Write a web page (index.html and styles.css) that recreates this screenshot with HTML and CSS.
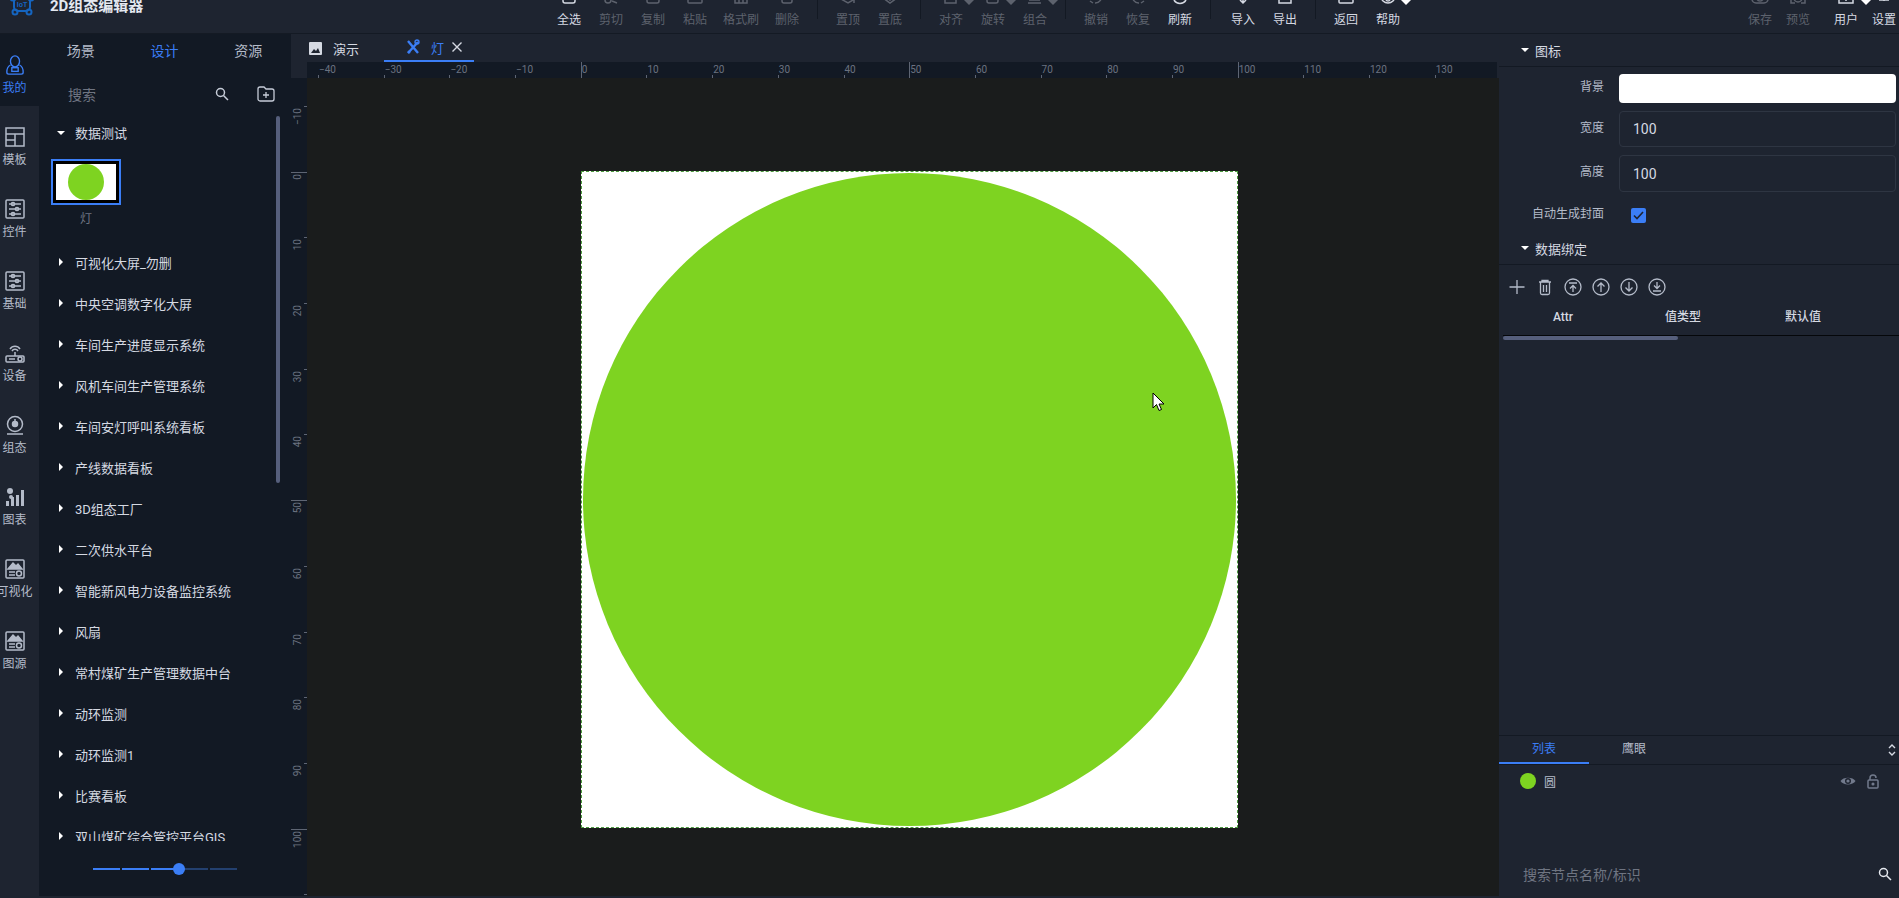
FILE: index.html
```html
<!DOCTYPE html>
<html lang="zh-CN">
<head>
    <meta charset="UTF-8">
    <title>2D组态编辑器</title>
    <link rel="stylesheet" href="styles.css">
</head>
<body>
<div class="app">
    <!-- top toolbar, its icons are cut by the top of the window -->
    <div class="topbar">
        <div class="brand">
            <svg class="logo" width="26" height="24" viewBox="0 0 26 24" fill="none" stroke="#1565c0" stroke-width="2">
                <rect x="5" y="4" width="16" height="15" rx="4"/>
                <circle cx="4" cy="6" r="2.5"/><circle cx="22" cy="6" r="2.5"/>
                <circle cx="6" cy="20" r="2.5"/><circle cx="20" cy="20" r="2.5"/>
                <text x="13" y="15" text-anchor="middle" font-size="7" font-weight="700" fill="#1565c0" stroke="none" font-family="Liberation Sans">IoT</text>
            </svg>
            <span class="brand-title">2D组态编辑器</span>
        </div>
        <div class="tool on"><svg class="ticon" viewBox="0 0 18 18"><rect x="3" y="6" width="12" height="10" rx="2"/></svg><span>全选</span></div>
        <div class="tool"><svg class="ticon" viewBox="0 0 18 18"><circle cx="6" cy="13" r="3"/><path d="M9 13l7-6M10 14l5 2"/></svg><span>剪切</span></div>
        <div class="tool"><svg class="ticon" viewBox="0 0 18 18"><rect x="3" y="6" width="12" height="10" rx="2"/></svg><span>复制</span></div>
        <div class="tool"><svg class="ticon" viewBox="0 0 18 18"><rect x="2" y="6" width="14" height="10" rx="1"/><path d="M2 12h14"/></svg><span>粘贴</span></div>
        <div class="tool wide"><svg class="ticon" viewBox="0 0 18 18"><path d="M3 10v6h12v-6M7 12v4M11 12v4"/></svg><span>格式刷</span></div>
        <div class="tool"><svg class="ticon" viewBox="0 0 18 18"><path d="M4 8v6a2 2 0 0 0 2 2h6a2 2 0 0 0 2-2V8"/></svg><span>删除</span></div>
        <i class="sep"></i>
        <div class="tool"><svg class="ticon" viewBox="0 0 18 18"><path d="M2 12l7 4 5-3M15 8v8"/></svg><span>置顶</span></div>
        <div class="tool"><svg class="ticon" viewBox="0 0 18 18"><path d="M2 11l7 5 7-5M6 11l3 2 3-2"/></svg><span>置底</span></div>
        <i class="sep"></i>
        <div class="tool"><svg class="ticon" viewBox="0 0 18 18"><rect x="3" y="6" width="11" height="10"/></svg><i class="caret"></i><span>对齐</span></div>
        <div class="tool"><svg class="ticon" viewBox="0 0 18 18"><rect x="3" y="6" width="11" height="10" rx="2"/></svg><i class="caret"></i><span>旋转</span></div>
        <div class="tool"><svg class="ticon" viewBox="0 0 18 18"><path d="M2 16h13M3 13h11"/></svg><i class="caret"></i><span>组合</span></div>
        <i class="sep"></i>
        <div class="tool"><svg class="ticon" viewBox="0 0 18 18"><path d="M3 14l3 2M14 8a6 6 0 0 1-6 8"/></svg><span>撤销</span></div>
        <div class="tool"><svg class="ticon" viewBox="0 0 18 18"><path d="M15 14l-3 2M4 8a6 6 0 0 0 6 8"/></svg><span>恢复</span></div>
        <div class="tool on"><svg class="ticon" viewBox="0 0 18 18"><path d="M3 13a7 7 0 0 0 12 0"/></svg><span>刷新</span></div>
        <i class="sep"></i>
        <div class="tool on gap"><svg class="ticon" viewBox="0 0 18 18"><path d="M9 10v5M6 13l3 3 3-3" /></svg><span>导入</span></div>
        <div class="tool on"><svg class="ticon" viewBox="0 0 18 18"><path d="M3 10v6h12v-6"/></svg><span>导出</span></div>
        <i class="sep"></i>
        <div class="tool on"><svg class="ticon" viewBox="0 0 18 18"><rect x="2" y="4" width="14" height="12" rx="1"/></svg><span>返回</span></div>
        <div class="tool on"><svg class="ticon" viewBox="0 0 18 18"><circle cx="9" cy="9" r="7"/><circle cx="9" cy="12" r="2"/></svg><i class="caret"></i><span>帮助</span></div>
        <div class="tool-right">
            <div class="tool slim"><svg class="ticon" viewBox="0 0 18 18"><rect x="1" y="6" width="16" height="10" rx="4"/><circle cx="9" cy="11" r="3"/></svg><span>保存</span></div>
            <div class="tool slim"><svg class="ticon" viewBox="0 0 18 18"><path d="M2 12v4h4M16 12v4h-4"/><circle cx="9" cy="11" r="4"/></svg><span>预览</span></div>
            <div class="tool slim on push"><svg class="ticon" viewBox="0 0 18 18"><rect x="2" y="4" width="14" height="12"/><path d="M9 8v6"/></svg><i class="caret"></i><span>用户</span></div>
            <div class="tool slim on"><svg class="ticon" viewBox="0 0 18 18"><path d="M4 13h10M9 8v6"/></svg><span>设置</span></div>
        </div>
    </div>

    <div class="main">
        <div class="rail">
            <div class="rail-item active">
                <svg class="rail-icon" viewBox="0 0 22 22" fill="none" stroke="#3b7ef6" stroke-width="1.8">
                    <ellipse cx="11" cy="7" rx="5" ry="6"/>
                    <path d="M6 11c-3 1.500-4 5-4 8 0 1 1 2 2 2h14c1 0 2-1 2-2 0-3-1-6.500-4-8"/>
                    <rect x="7.500" y="14" width="7" height="4"/>
                </svg>
                <span>我的</span>
            </div>
            <div class="rail-item">
                <svg class="rail-icon" viewBox="0 0 20 20"><rect x="1" y="1" width="18" height="18"/><path d="M1 7h18M10 7v12M1 13h9"/></svg>
                <span>模板</span>
            </div>
            <div class="rail-item">
                <svg class="rail-icon" viewBox="0 0 20 20"><rect x="1" y="1" width="18" height="18" rx="1"/><path d="M4 5h12M4 10h12M4 15h12"/><circle cx="8" cy="5" r="1.600"/><circle cx="12" cy="10" r="1.600"/><circle cx="8" cy="15" r="1.600"/></svg>
                <span>控件</span>
            </div>
            <div class="rail-item">
                <svg class="rail-icon" viewBox="0 0 20 20"><rect x="1" y="1" width="18" height="18" rx="1"/><path d="M4 5h12M4 10h12M4 15h12"/><circle cx="8" cy="5" r="1.600"/><circle cx="12" cy="10" r="1.600"/><circle cx="8" cy="15" r="1.600"/></svg>
                <span>基础</span>
            </div>
            <div class="rail-item">
                <svg class="rail-icon" viewBox="0 0 20 20"><path d="M5 6a6 6 0 0 1 10 0M7 8a3.500 3.500 0 0 1 6 0"/><path d="M10 9v4"/><rect x="1" y="13" width="18" height="6" rx="1"/><circle cx="15" cy="16" r="2"/><path d="M4 16h6"/></svg>
                <span>设备</span>
            </div>
            <div class="rail-item">
                <svg class="rail-icon" viewBox="0 0 20 20"><circle cx="10" cy="9" r="7.500"/><circle cx="10" cy="9" r="2.500" fill="#b4bbc9"/><path d="M10 4v3M2 19h16"/></svg>
                <span>组态</span>
            </div>
            <div class="rail-item">
                <svg class="rail-icon solid" viewBox="0 0 20 20"><circle cx="5" cy="4" r="3"/><path d="M1 19v-5h3v5zM6 19v-9h3v9zM11 19v-11h3v11zM16 19V3h3v16z"/><circle cx="6" cy="10" r="2"/></svg>
                <span>图表</span>
            </div>
            <div class="rail-item">
                <svg class="rail-icon" viewBox="0 0 20 20"><rect x="1" y="1" width="18" height="18" rx="1"/><path d="M3 10l5-6 3 3 2-2 4 5z" fill="#b4bbc9"/><path d="M4 13h6M4 16h6"/><circle cx="14" cy="14.500" r="2.500"/></svg>
                <span>可视化</span>
            </div>
            <div class="rail-item">
                <svg class="rail-icon" viewBox="0 0 20 20"><rect x="1" y="1" width="18" height="18" rx="1"/><path d="M3 10l5-6 3 3 2-2 4 5z" fill="#b4bbc9"/><path d="M4 13h6M4 16h6"/><circle cx="14" cy="14.500" r="2.500"/></svg>
                <span>图源</span>
            </div>
        </div>

        <div class="panel">
            <div class="panel-tabs">
                <div class="panel-tab">场景</div>
                <div class="panel-tab active">设计</div>
                <div class="panel-tab">资源</div>
            </div>
            <div class="panel-search">
                <span class="search-text">搜索</span>
                <svg class="search-icon" width="14" height="14" viewBox="0 0 14 14" fill="none" stroke="#c6ccd8" stroke-width="1.500"><circle cx="5.500" cy="5.500" r="4"/><path d="M8.500 8.500l4.500 4.500"/></svg>
                <svg class="folder-icon" width="18" height="16" viewBox="0 0 18 16" fill="none" stroke="#c6ccd8" stroke-width="1.300"><path d="M1 3a2 2 0 0 1 2-2h4l2 2h6a2 2 0 0 1 2 2v8a2 2 0 0 1-2 2H3a2 2 0 0 1-2-2z"/><path d="M9 6v6M6 9h6"/></svg>
            </div>
            <div class="tree">
                <div class="tree-row"><span class="arrow"><i class="tri-down"></i></span>数据测试</div>
                <div class="thumb-wrap">
                    <div class="thumb"><div class="thumb-page"><div class="thumb-dot"></div></div></div>
                    <div class="thumb-name">灯</div>
                </div>
                <div class="tree-row"><span class="arrow"><i class="tri-right"></i></span>可视化大屏_勿删</div>
                <div class="tree-row"><span class="arrow"><i class="tri-right"></i></span>中央空调数字化大屏</div>
                <div class="tree-row"><span class="arrow"><i class="tri-right"></i></span>车间生产进度显示系统</div>
                <div class="tree-row"><span class="arrow"><i class="tri-right"></i></span>风机车间生产管理系统</div>
                <div class="tree-row"><span class="arrow"><i class="tri-right"></i></span>车间安灯呼叫系统看板</div>
                <div class="tree-row"><span class="arrow"><i class="tri-right"></i></span>产线数据看板</div>
                <div class="tree-row"><span class="arrow"><i class="tri-right"></i></span>3D组态工厂</div>
                <div class="tree-row"><span class="arrow"><i class="tri-right"></i></span>二次供水平台</div>
                <div class="tree-row"><span class="arrow"><i class="tri-right"></i></span>智能新风电力设备监控系统</div>
                <div class="tree-row"><span class="arrow"><i class="tri-right"></i></span>风扇</div>
                <div class="tree-row"><span class="arrow"><i class="tri-right"></i></span>常村煤矿生产管理数据中台</div>
                <div class="tree-row"><span class="arrow"><i class="tri-right"></i></span>动环监测</div>
                <div class="tree-row"><span class="arrow"><i class="tri-right"></i></span>动环监测1</div>
                <div class="tree-row"><span class="arrow"><i class="tri-right"></i></span>比赛看板</div>
                <div class="tree-row"><span class="arrow"><i class="tri-right"></i></span>双山煤矿综合管控平台GIS</div>
                <div class="tree-scroll"></div>
            </div>
            <div class="slider">
                <div class="slider-track">
                    <i class="seg done"></i><i class="seg done"></i><i class="seg done"></i><i class="seg"></i><i class="seg"></i>
                    <i class="slider-thumb"></i>
                </div>
            </div>
        </div>

        <div class="center">
            <div class="doc-tabs">
                <div class="doc-tab first">
                    <svg width="13" height="13" viewBox="0 0 13 13"><rect width="13" height="13" rx="1" fill="#d5d9e2"/><path d="M2 11l3-4 2 2 2-3 2 5z" fill="#1e2430"/></svg>
                    <span>演示</span>
                </div>
                <div class="doc-tab active">
                    <svg width="14" height="16" viewBox="0 0 14 16" fill="none" stroke="#3b7ef6" stroke-width="2.400"><path d="M2 2l10 12M12 3L2 14"/><circle cx="11" cy="3" r="2" stroke-width="1.400"/><circle cx="3" cy="13" r="1.500" fill="#3b7ef6" stroke="none"/></svg>
                    <span>灯</span>
                    <svg class="doc-close" width="12" height="12" viewBox="0 0 12 12" stroke="#d5d9e2" stroke-width="1.400"><path d="M1.500 1.500l9 9M10.500 1.500l-9 9"/></svg>
                </div>
            </div>
            <div class="ruler-row">
                <div class="ruler-corner"></div>
                <div class="ruler-top">
                    <div class="tick"><span>−40</span></div>
                    <div class="tick"><span>−30</span></div>
                    <div class="tick"><span>−20</span></div>
                    <div class="tick"><span>−10</span></div>
                    <div class="tick major"><span>0</span></div>
                    <div class="tick"><span>10</span></div>
                    <div class="tick"><span>20</span></div>
                    <div class="tick"><span>30</span></div>
                    <div class="tick"><span>40</span></div>
                    <div class="tick major"><span>50</span></div>
                    <div class="tick"><span>60</span></div>
                    <div class="tick"><span>70</span></div>
                    <div class="tick"><span>80</span></div>
                    <div class="tick"><span>90</span></div>
                    <div class="tick major"><span>100</span></div>
                    <div class="tick"><span>110</span></div>
                    <div class="tick"><span>120</span></div>
                    <div class="tick"><span>130</span></div>
                </div>
            </div>
            <div class="stage">
                <div class="ruler-left">
                    <div class="vtick"><span>−10</span></div>
                    <div class="vtick major"><span>0</span></div>
                    <div class="vtick"><span>10</span></div>
                    <div class="vtick"><span>20</span></div>
                    <div class="vtick"><span>30</span></div>
                    <div class="vtick"><span>40</span></div>
                    <div class="vtick major"><span>50</span></div>
                    <div class="vtick"><span>60</span></div>
                    <div class="vtick"><span>70</span></div>
                    <div class="vtick"><span>80</span></div>
                    <div class="vtick"><span>90</span></div>
                    <div class="vtick major"><span>100</span></div>
                    <div class="vtick"></div>
                </div>
                <div class="canvas">
                    <div class="page"><div class="circle"></div></div>
                    <svg class="cursor" width="13" height="20" viewBox="0 0 13 20"><path d="M1 1v15l3.500-3.500L7 18.500l2.500-1-2.500-5.500h5z" fill="#fff" stroke="#000" stroke-width="1"/></svg>
                </div>
            </div>
        </div>

        <div class="side">
            <div class="sec-head"><i class="tri-down small"></i>图标</div>
            <div class="form">
                <div class="form-row">
                    <label class="form-label">背景</label>
                    <div class="swatch"></div>
                </div>
                <div class="form-row">
                    <label class="form-label">宽度</label>
                    <div class="field">100</div>
                </div>
                <div class="form-row">
                    <label class="form-label">高度</label>
                    <div class="field">100</div>
                </div>
                <div class="form-row check-row">
                    <label class="form-label">自动生成封面</label>
                    <div class="check">
                        <svg width="11" height="9" viewBox="0 0 11 9" fill="none" stroke="#1e2430" stroke-width="1.600"><path d="M1 4.500l3 3 6-6.500"/></svg>
                    </div>
                </div>
            </div>
            <div class="sec-head"><i class="tri-down small"></i>数据绑定</div>
            <div class="actions">
                <svg class="act" viewBox="0 0 18 18"><path d="M9 2v14M1.500 9h15"/></svg>
                <svg class="act" viewBox="0 0 18 18"><path d="M3 4h12M6 4V2.500h6V4M4.500 4v11a1.500 1.500 0 0 0 1.500 1.500h6a1.500 1.500 0 0 0 1.500-1.500V4M7.500 7v7M10.500 7v7"/></svg>
                <svg class="act" viewBox="0 0 18 18"><circle cx="9" cy="9" r="8"/><path d="M5 5h8M9 14V7.500M6 10.500l3-3 3 3"/></svg>
                <svg class="act" viewBox="0 0 18 18"><circle cx="9" cy="9" r="8"/><path d="M9 14V5M5.500 8.500L9 5l3.500 3.500"/></svg>
                <svg class="act" viewBox="0 0 18 18"><circle cx="9" cy="9" r="8"/><path d="M9 4v9M5.500 9.500L9 13l3.500-3.500"/></svg>
                <svg class="act" viewBox="0 0 18 18"><circle cx="9" cy="9" r="8"/><path d="M5 13h8M9 4v6.500M6 7.500l3 3 3-3"/></svg>
            </div>
            <div class="bind-head">
                <div>Attr</div>
                <div>值类型</div>
                <div>默认值</div>
            </div>
            <div class="bind-scroll"></div>
            <div class="side-spacer"></div>
            <div class="list-tabs">
                <div class="list-tab active">列表</div>
                <div class="list-tab">鹰眼</div>
                <svg class="list-toggle" width="8" height="14" viewBox="0 0 8 14" fill="none" stroke="#d5d9e2" stroke-width="1.400"><path d="M1 5l3-3 3 3M1 9l3 3 3-3"/></svg>
            </div>
            <div class="node">
                <i class="node-dot"></i>
                <span class="node-name">圆</span>
                <svg class="node-eye" width="16" height="12" viewBox="0 0 16 12"><path d="M0.500 6C3 1.500 13 1.500 15.500 6 13 10.500 3 10.500 0.500 6z" fill="#727a8c"/><circle cx="8" cy="6" r="3" fill="#1e2430"/><circle cx="8" cy="6" r="1.600" fill="#727a8c"/></svg>
                <svg class="node-lock" width="12" height="15" viewBox="0 0 12 15" fill="none" stroke="#727a8c" stroke-width="1.500"><rect x="1" y="6" width="10" height="8" rx="1"/><path d="M3 6V4a3 3 0 0 1 6 0"/><circle cx="6" cy="10" r="0.800"/></svg>
            </div>
            <div class="node-gap"></div>
            <div class="node-search">
                <span>搜索节点名称/标识</span>
                <svg width="14" height="14" viewBox="0 0 14 14" fill="none" stroke="#e6e9ef" stroke-width="1.500"><circle cx="5.500" cy="5.500" r="4"/><path d="M8.500 8.500l4.500 4.500"/></svg>
            </div>
        </div>
    </div>
</div>
</body>
</html>
```

FILE: styles.css
```css
html, body {
    margin: 0;
    height: 100%;
    overflow: hidden;
}
body {
    font-family: Roboto, "Noto Sans CJK SC", sans-serif;
    font-size: 12px;
    color: #d5d9e2;
    background: #1e2430;
}
.app {
    height: 100vh;
    padding-bottom: 2px;
    box-sizing: border-box;
    display: flex;
    flex-direction: column;
}

/* top toolbar */
.topbar {
    height: 33px;
    flex: none;
    display: flex;
    align-items: flex-end;
    border-bottom: 1px solid #141a24;
    overflow: hidden;
}
.brand {
    width: 548px;
    flex: none;
    display: flex;
    align-items: flex-end;
    padding-left: 9px;
    margin-bottom: 17px;
    box-sizing: border-box;
}
.logo {
    flex: none;
}
.brand-title {
    margin-left: 15px;
    font-size: 15px;
    font-weight: 700;
    line-height: 20px;
    color: #e4e8f0;
    white-space: nowrap;
}
.tool {
    position: relative;
    width: 42px;
    flex: none;
    display: flex;
    flex-direction: column;
    align-items: center;
    padding-bottom: 4px;
    line-height: 18px;
    color: #5d626d;
}
.tool.on {
    color: #d5d9e2;
}
.tool.wide {
    width: 50px;
}
.tool.slim {
    width: 38px;
}
.tool.gap {
    margin-left: 2px;
}
.ticon {
    width: 18px;
    height: 18px;
    margin-bottom: 6px;
    fill: none;
    stroke: #5d626d;
    stroke-width: 1.500;
}
.tool.on .ticon {
    stroke: #d5d9e2;
}
.caret {
    position: absolute;
    left: 34px;
    top: 13px;
    border-left: 5px solid transparent;
    border-right: 5px solid transparent;
    border-top: 5px solid #5d626d;
}
.tool.on .caret {
    border-top-color: #fff;
}
.sep {
    width: 1px;
    height: 19px;
    flex: none;
    align-self: flex-start;
    margin: 0 9px;
    background: #131923;
}
.tool-right {
    margin-left: auto;
    margin-right: -4px;
    display: flex;
    align-items: flex-end;
}
.tool.push {
    margin-left: 10px;
}

/* main columns */
.main {
    flex: 1;
    min-height: 0;
    display: flex;
}

/* icon rail */
.rail {
    width: 39px;
    flex: none;
    overflow: hidden;
}
.rail-item {
    height: 72px;
    box-sizing: border-box;
    padding: 21px 10px 0 0;
    display: flex;
    flex-direction: column;
    align-items: center;
    line-height: 18px;
    color: #b4bbc9;
    white-space: nowrap;
}
.rail-item.active {
    background: #121924;
    color: #3b7ef6;
}
.rail-icon {
    width: 20px;
    height: 20px;
    flex: none;
    margin-bottom: 4px;
    fill: none;
    stroke: #b4bbc9;
    stroke-width: 1.500;
}
.rail-item.active .rail-icon {
    width: 22px;
    stroke: #3b7ef6;
}
.rail-icon.solid {
    fill: #b4bbc9;
    stroke: none;
}

/* resource panel */
.panel {
    width: 252px;
    flex: none;
    background: #121924;
    display: flex;
    flex-direction: column;
}
.panel-tabs {
    height: 34px;
    flex: none;
    display: flex;
    padding-right: 1px;
}
.panel-tab {
    flex: 1;
    font-size: 14px;
    line-height: 34px;
    text-align: center;
    color: #b4bbc9;
}
.panel-tab.active {
    color: #3b7ef6;
}
.panel-search {
    height: 44px;
    flex: none;
    box-sizing: border-box;
    display: flex;
    align-items: center;
    padding: 8px 0 0 29px;
}
.search-text {
    width: 147px;
    font-size: 14px;
    color: #6f7582;
}
.folder-icon {
    margin-left: 28px;
}
.tree {
    position: relative;
    height: 729px;
    flex: none;
    overflow: hidden;
    box-sizing: border-box;
}
.tree-row {
    height: 41px;
    display: flex;
    align-items: center;
    padding-left: 14px;
    font-size: 13px;
    color: #d5d9e2;
    white-space: nowrap;
}
.arrow {
    width: 16px;
    margin-right: 6px;
    display: flex;
    justify-content: center;
}
.tri-down {
    width: 0;
    height: 0;
    border-left: 4px solid transparent;
    border-right: 4px solid transparent;
    border-top: 4px solid #fff;
}
.tri-down.small {
    margin-right: 6px;
}
.tri-right {
    width: 0;
    height: 0;
    border-top: 4px solid transparent;
    border-bottom: 4px solid transparent;
    border-left: 4px solid #fff;
}
.thumb-wrap {
    width: 70px;
    height: 88.5px;
    box-sizing: border-box;
    margin-left: 12px;
    padding-top: 6px;
    display: flex;
    flex-direction: column;
    align-items: center;
}
.thumb {
    width: 70px;
    height: 46px;
    flex: none;
    box-sizing: border-box;
    border: 2px solid #3b7ef6;
    background: #000;
    padding: 3px;
}
.thumb-page {
    height: 100%;
    background: #fff;
    display: flex;
    justify-content: center;
}
.thumb-dot {
    width: 36px;
    height: 36px;
    border-radius: 50%;
    background: #7ed321;
}
.thumb-name {
    margin-top: 5px;
    line-height: 18px;
    color: #6f7582;
}
.tree-scroll {
    position: absolute;
    left: 237px;
    top: 4px;
    width: 4px;
    height: 367px;
    border-radius: 2px;
    background: #565f7c;
}
.slider {
    flex: 1;
    display: flex;
    align-items: center;
    padding: 0 54px 0 54px;
}
.slider-track {
    position: relative;
    flex: 1;
    display: flex;
    gap: 2px;
}
.seg {
    flex: 1;
    height: 2px;
    background: #23406f;
}
.seg.done {
    background: #3b7ef6;
}
.slider-thumb {
    position: absolute;
    left: 80px;
    top: -5px;
    width: 12px;
    height: 12px;
    border-radius: 50%;
    background: #3b7ef6;
}

/* document area */
.center {
    flex: 1;
    min-width: 0;
    display: flex;
    flex-direction: column;
}
.doc-tabs {
    height: 28px;
    flex: none;
    display: flex;
}
.doc-tab {
    display: flex;
    align-items: center;
    gap: 11px;
    font-size: 13px;
    box-sizing: border-box;
}
.doc-tab.first {
    width: 93px;
    padding-left: 18px;
}
.doc-tab.active {
    width: 90px;
    padding-left: 22px;
    color: #3b7ef6;
    border-bottom: 2px solid #3b7ef6;
}
.doc-close {
    margin-left: -4px;
}
.ruler-row {
    height: 16px;
    flex: none;
    display: flex;
    padding-right: 2px;
}
.ruler-corner {
    width: 16px;
    flex: none;
}
.ruler-top {
    flex: 1;
    min-width: 0;
    display: flex;
    padding-left: 11px;
    background: #121924;
    overflow: hidden;
}
.tick {
    position: relative;
    flex: 0 0 65.7px;
    box-sizing: border-box;
    padding-left: 1px;
    font-size: 10px;
    line-height: 16px;
    color: #6b7280;
}
.tick::before {
    content: "";
    position: absolute;
    left: 0;
    bottom: 0;
    width: 1px;
    height: 3px;
    background: #5e6573;
}
.tick.major::before {
    height: 16px;
}
.stage {
    flex: 1;
    min-height: 0;
    display: flex;
}
.ruler-left {
    width: 16px;
    flex: none;
    background: #121924;
    padding-top: 28px;
    box-sizing: border-box;
    overflow: hidden;
}
.vtick {
    position: relative;
    height: 65.7px;
    box-sizing: border-box;
    padding-top: 2px;
    font-size: 10px;
    color: #6b7280;
}
.vtick span {
    display: block;
    writing-mode: vertical-rl;
    transform: rotate(180deg);
    width: 16px;
    line-height: 14px;
    text-align: right;
}
.vtick::before {
    content: "";
    position: absolute;
    right: 0;
    top: 0;
    width: 3px;
    height: 1px;
    background: #5e6573;
}
.vtick.major::before {
    width: 16px;
}
.canvas {
    position: relative;
    flex: 1;
    min-width: 0;
    background: #1a1c1c;
    overflow: hidden;
}
.page {
    position: absolute;
    left: 274px;
    top: 93px;
    width: 657px;
    height: 657px;
    box-sizing: border-box;
    background: #fff;
    border: 1px dashed #4c9a3e;
    display: flex;
    align-items: center;
    justify-content: center;
}
.circle {
    width: 653px;
    height: 653px;
    border-radius: 50%;
    background: #7ed321;
}
.cursor {
    position: absolute;
    left: 845px;
    top: 314px;
}

/* property panel */
.side {
    width: 400px;
    flex: none;
    display: flex;
    flex-direction: column;
}
.sec-head {
    height: 33px;
    flex: none;
    box-sizing: border-box;
    display: flex;
    align-items: center;
    padding-left: 22px;
    border-bottom: 1px solid #131923;
    font-size: 13px;
    color: #d5d9e2;
}
.form {
    padding-top: 7px;
}
.form-row {
    display: flex;
    align-items: center;
    margin-bottom: 8px;
}
.form-label {
    width: 105px;
    flex: none;
    padding-bottom: 3px;
    margin-right: 15px;
    text-align: right;
    line-height: 18px;
    color: #b4bbc9;
}
.swatch {
    width: 277px;
    height: 29px;
    background: #fff;
    border-radius: 4px;
}
.field {
    width: 277px;
    height: 36px;
    box-sizing: border-box;
    border: 1px solid #2e3542;
    border-radius: 4px;
    padding-left: 13px;
    font-size: 14px;
    line-height: 34px;
    color: #d5d9e2;
}
.form-row + .form-row + .form-row .field {
    height: 37px;
    line-height: 36px;
}
.check-row {
    height: 30px;
    margin-bottom: 2px;
}
.check {
    width: 15px;
    height: 15px;
    margin-left: 12px;
    border-radius: 2px;
    background: #3b7ef6;
    display: flex;
    align-items: center;
    justify-content: center;
}
.actions {
    height: 44px;
    flex: none;
    display: flex;
    align-items: center;
    gap: 10px;
    padding-left: 9px;
}
.act {
    width: 18px;
    height: 18px;
    fill: none;
    stroke: #b4bbc9;
    stroke-width: 1.300;
}
.bind-head {
    height: 25px;
    flex: none;
    display: flex;
    margin-left: 4px;
    padding-top: 1px;
    border-bottom: 1px solid #05070a;
    line-height: 14px;
    font-weight: 500;
}
.bind-head div {
    width: 120px;
    text-align: center;
}
.bind-scroll {
    width: 175px;
    height: 4px;
    flex: none;
    margin-left: 4px;
    border-radius: 2px;
    background: #565f7c;
}
.side-spacer {
    flex: 1;
}
.list-tabs {
    height: 28px;
    flex: none;
    position: relative;
    display: flex;
    border-top: 1px solid #131923;
    border-bottom: 1px solid #131923;
}
.list-tab {
    width: 90px;
    height: 28px;
    box-sizing: content-box;
    text-align: center;
    line-height: 27px;
    color: #b4bbc9;
}
.list-tab.active {
    height: 26px;
    color: #3b7ef6;
    border-bottom: 2px solid #3b7ef6;
}
.list-toggle {
    position: absolute;
    right: 3px;
    top: 7px;
}
.node {
    height: 32px;
    flex: none;
    display: flex;
    align-items: center;
    padding-left: 21px;
}
.node-dot {
    width: 16px;
    height: 16px;
    border-radius: 50%;
    background: #7ed321;
}
.node-name {
    margin-left: 8px;
    color: #b4bbc9;
}
.node-eye {
    margin-left: auto;
}
.node-lock {
    margin-left: 11px;
    margin-right: 20px;
}
.node-gap {
    height: 61px;
    flex: none;
}
.node-search {
    height: 38px;
    flex: none;
    box-sizing: border-box;
    display: flex;
    align-items: center;
    justify-content: space-between;
    padding: 0 7px 7px 24px;
    font-size: 14px;
    color: #6f7582;
}
```
